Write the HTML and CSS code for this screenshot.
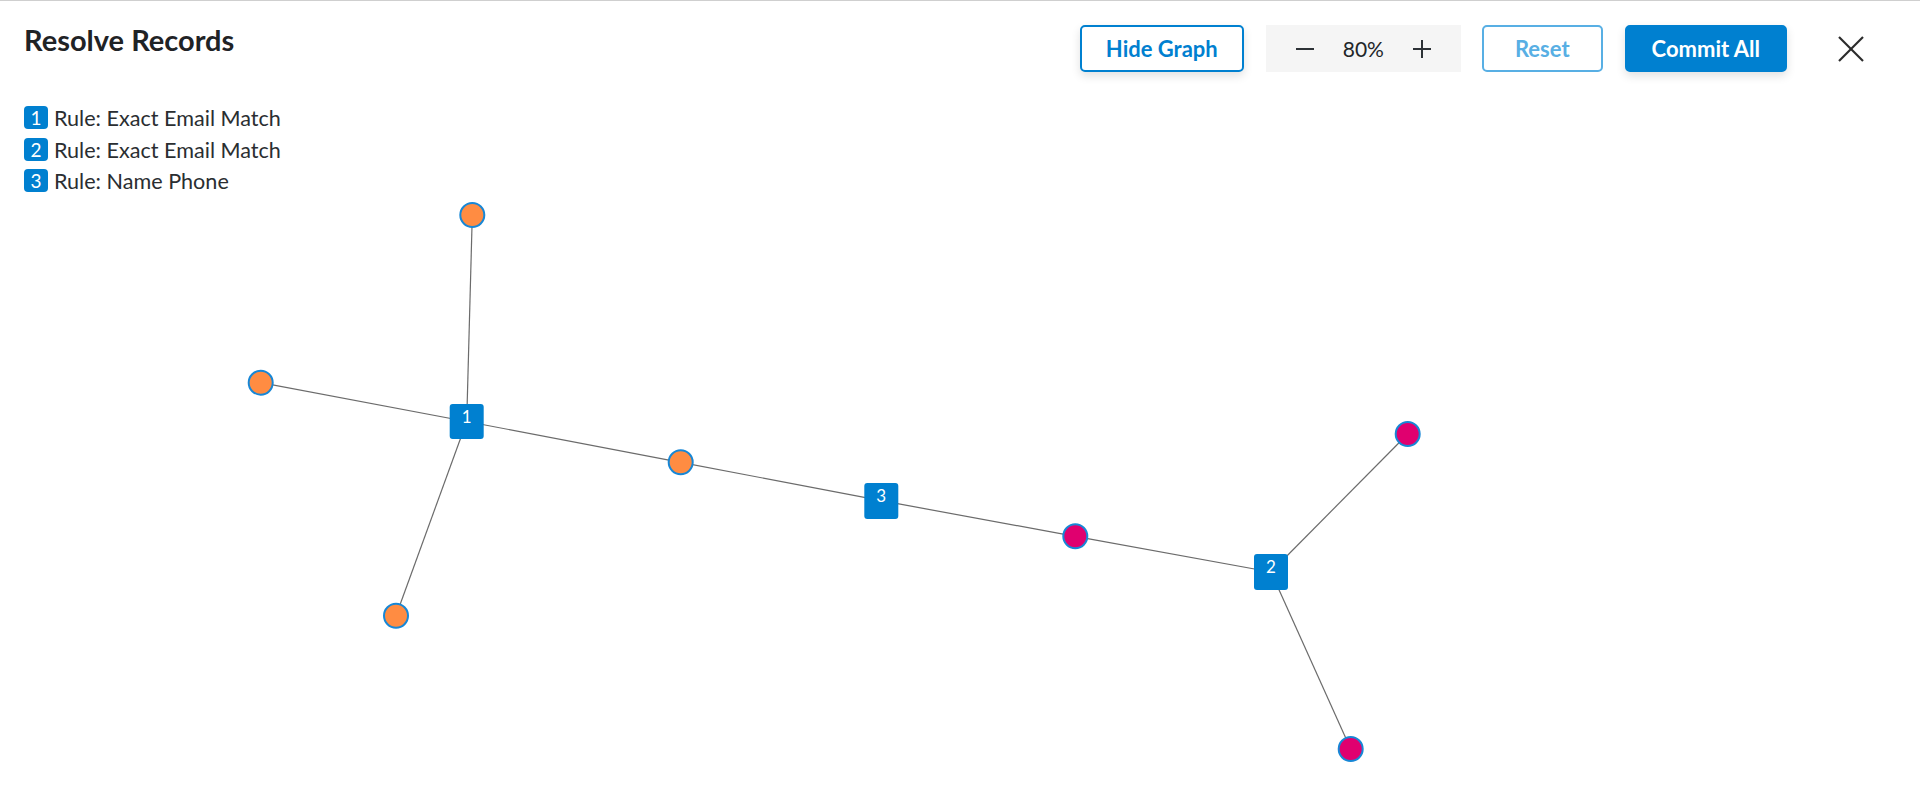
FILE: index.html
```html
<!DOCTYPE html>
<html lang="en">
<head>
<meta charset="utf-8">
<title>Resolve Records</title>
<link rel="stylesheet" href="styles.css">
</head>
<body>
<div class="app">
  <header class="header">
    <h1 class="title">Resolve Records</h1>
    <div class="actions">
      <button class="btn btn-outline btn-shadow">Hide Graph</button>
      <div class="zoom">
        <svg class="zoom-icon" viewBox="0 0 20 20" width="20" height="20"><line x1="1" y1="10" x2="19" y2="10"/></svg>
        <span class="zoom-value">80%</span>
        <svg class="zoom-icon" viewBox="0 0 20 20" width="20" height="20"><line x1="1" y1="10" x2="19" y2="10"/><line x1="10" y1="1" x2="10" y2="19"/></svg>
      </div>
      <button class="btn btn-outline btn-disabled">Reset</button>
      <button class="btn btn-primary btn-shadow">Commit All</button>
      <button class="close" aria-label="Close">
        <svg viewBox="0 0 26 26" width="26" height="26"><line x1="1" y1="1" x2="25" y2="25"/><line x1="25" y1="1" x2="1" y2="25"/></svg>
      </button>
    </div>
  </header>
  <main class="stage">
    <ul class="legend">
      <li class="legend-row"><span class="badge">1</span><span>Rule: Exact Email Match</span></li>
      <li class="legend-row"><span class="badge">2</span><span>Rule: Exact Email Match</span></li>
      <li class="legend-row"><span class="badge">3</span><span>Rule: Name Phone</span></li>
    </ul>
    <svg class="graph" viewBox="0 73 1920 721" width="1920" height="721">
      <g class="edges">
        <line x1="472.3" y1="215" x2="466.7" y2="421.5"/>
        <line x1="260.7" y1="382.7" x2="466.7" y2="421.5"/>
        <line x1="396" y1="615.7" x2="466.7" y2="421.5"/>
        <line x1="680.7" y1="462.3" x2="466.7" y2="421.5"/>
        <line x1="680.7" y1="462.3" x2="881.3" y2="500.7"/>
        <line x1="1075.3" y1="536.3" x2="881.3" y2="500.7"/>
        <line x1="1075.3" y1="536.3" x2="1271" y2="572"/>
        <line x1="1407.7" y1="434" x2="1271" y2="572"/>
        <line x1="1350.7" y1="749" x2="1271" y2="572"/>
      </g>
      <g class="records">
        <circle class="rec-a" cx="472.3" cy="215" r="12"/>
        <circle class="rec-a" cx="260.7" cy="382.7" r="12"/>
        <circle class="rec-a" cx="396" cy="615.7" r="12"/>
        <circle class="rec-a" cx="680.7" cy="462.3" r="12"/>
        <circle class="rec-b" cx="1075.3" cy="536.3" r="12"/>
        <circle class="rec-b" cx="1407.7" cy="434" r="12"/>
        <circle class="rec-b" cx="1350.7" cy="749" r="12"/>
      </g>
      <g class="rules">
        <rect x="449.7" y="404" width="34" height="35" rx="3"/>
        <text x="466.7" y="422.5">1</text>
        <rect x="864.3" y="483" width="34" height="36" rx="3"/>
        <text x="881.3" y="501.5">3</text>
        <rect x="1254" y="554" width="34" height="36" rx="3"/>
        <text x="1271" y="572.5">2</text>
      </g>
    </svg>
  </main>
</div>
</body>
</html>
```

FILE: styles.css
```css
* { box-sizing: border-box; }

html, body {
  margin: 0;
  padding: 0;
  background: #ffffff;
}

body {
  font-family: "Lato", "Liberation Sans", sans-serif;
  color: #222629;
  border-top: 1px solid #cfcfcf;
  height: 794px;
  overflow: hidden;
}

.app {
  display: flex;
  flex-direction: column;
  height: 793px;
}

.header {
  display: flex;
  justify-content: space-between;
  align-items: flex-start;
  padding: 21px 49px 0 24px;
  height: 72px;
  flex: none;
}

.title {
  margin: 0;
  font-size: 29px;
  font-weight: 700;
  line-height: normal;
  color: #1f2326;
}

.actions {
  display: flex;
  align-items: center;
  gap: 22px;
  margin-top: 3px;
}

.btn {
  font-family: inherit;
  font-size: 22px;
  font-weight: 700;
  height: 47px;
  line-height: 43px;
  border-radius: 5px;
  border: 2px solid #0080d0;
  cursor: pointer;
}

.btn-outline {
  background: #ffffff;
  color: #0080d0;
  padding: 0 24px;
}

.btn-disabled {
  border-color: #58afe4;
  color: #58afe4;
  padding: 0 31px;
  margin-left: -1px;
}

.btn-primary {
  background: #0080d0;
  color: #ffffff;
  padding: 0 25px;
}

.btn-shadow {
  box-shadow: 0 4px 10px rgba(0, 0, 0, 0.12);
}

.zoom {
  display: flex;
  align-items: center;
  gap: 28px;
  height: 47px;
  padding: 0 29px;
  background: #f5f5f5;
}

.zoom-icon {
  display: block;
  stroke: #2d3236;
  stroke-width: 2;
}

.zoom-value {
  font-size: 21px;
  color: #222629;
}

.close {
  display: flex;
  align-items: center;
  justify-content: center;
  width: 40px;
  height: 40px;
  margin-left: 22px;
  padding: 0;
  background: none;
  border: none;
  cursor: pointer;
}

.close svg {
  stroke: #2b2b2b;
  stroke-width: 2.2;
}

.stage {
  position: relative;
  flex: 1;
}

.legend {
  position: absolute;
  top: 30px;
  left: 24px;
  margin: 0;
  padding: 0;
  list-style: none;
  font-size: 21.6px;
  line-height: 31.5px;
  color: #2a2e31;
}

.legend-row {
  display: flex;
  align-items: flex-start;
  gap: 6px;
}

.badge {
  display: flex;
  align-items: center;
  justify-content: center;
  width: 24px;
  height: 23px;
  margin-top: 3px;
  border-radius: 4px;
  background: #0080d0;
  color: #ffffff;
  font-size: 19px;
  line-height: 1;
}

.graph {
  display: block;
}

.edges line {
  stroke: #6b6b6b;
  stroke-width: 1.2;
}

.records circle {
  stroke: #1787d6;
  stroke-width: 2;
}

.rec-a { fill: #ff8c42; }
.rec-b { fill: #e0006f; }

.rules rect { fill: #0080d0; }

.rules text {
  fill: #ffffff;
  font-family: "Lato", "Liberation Sans", sans-serif;
  font-size: 17px;
  text-anchor: middle;
}
```
